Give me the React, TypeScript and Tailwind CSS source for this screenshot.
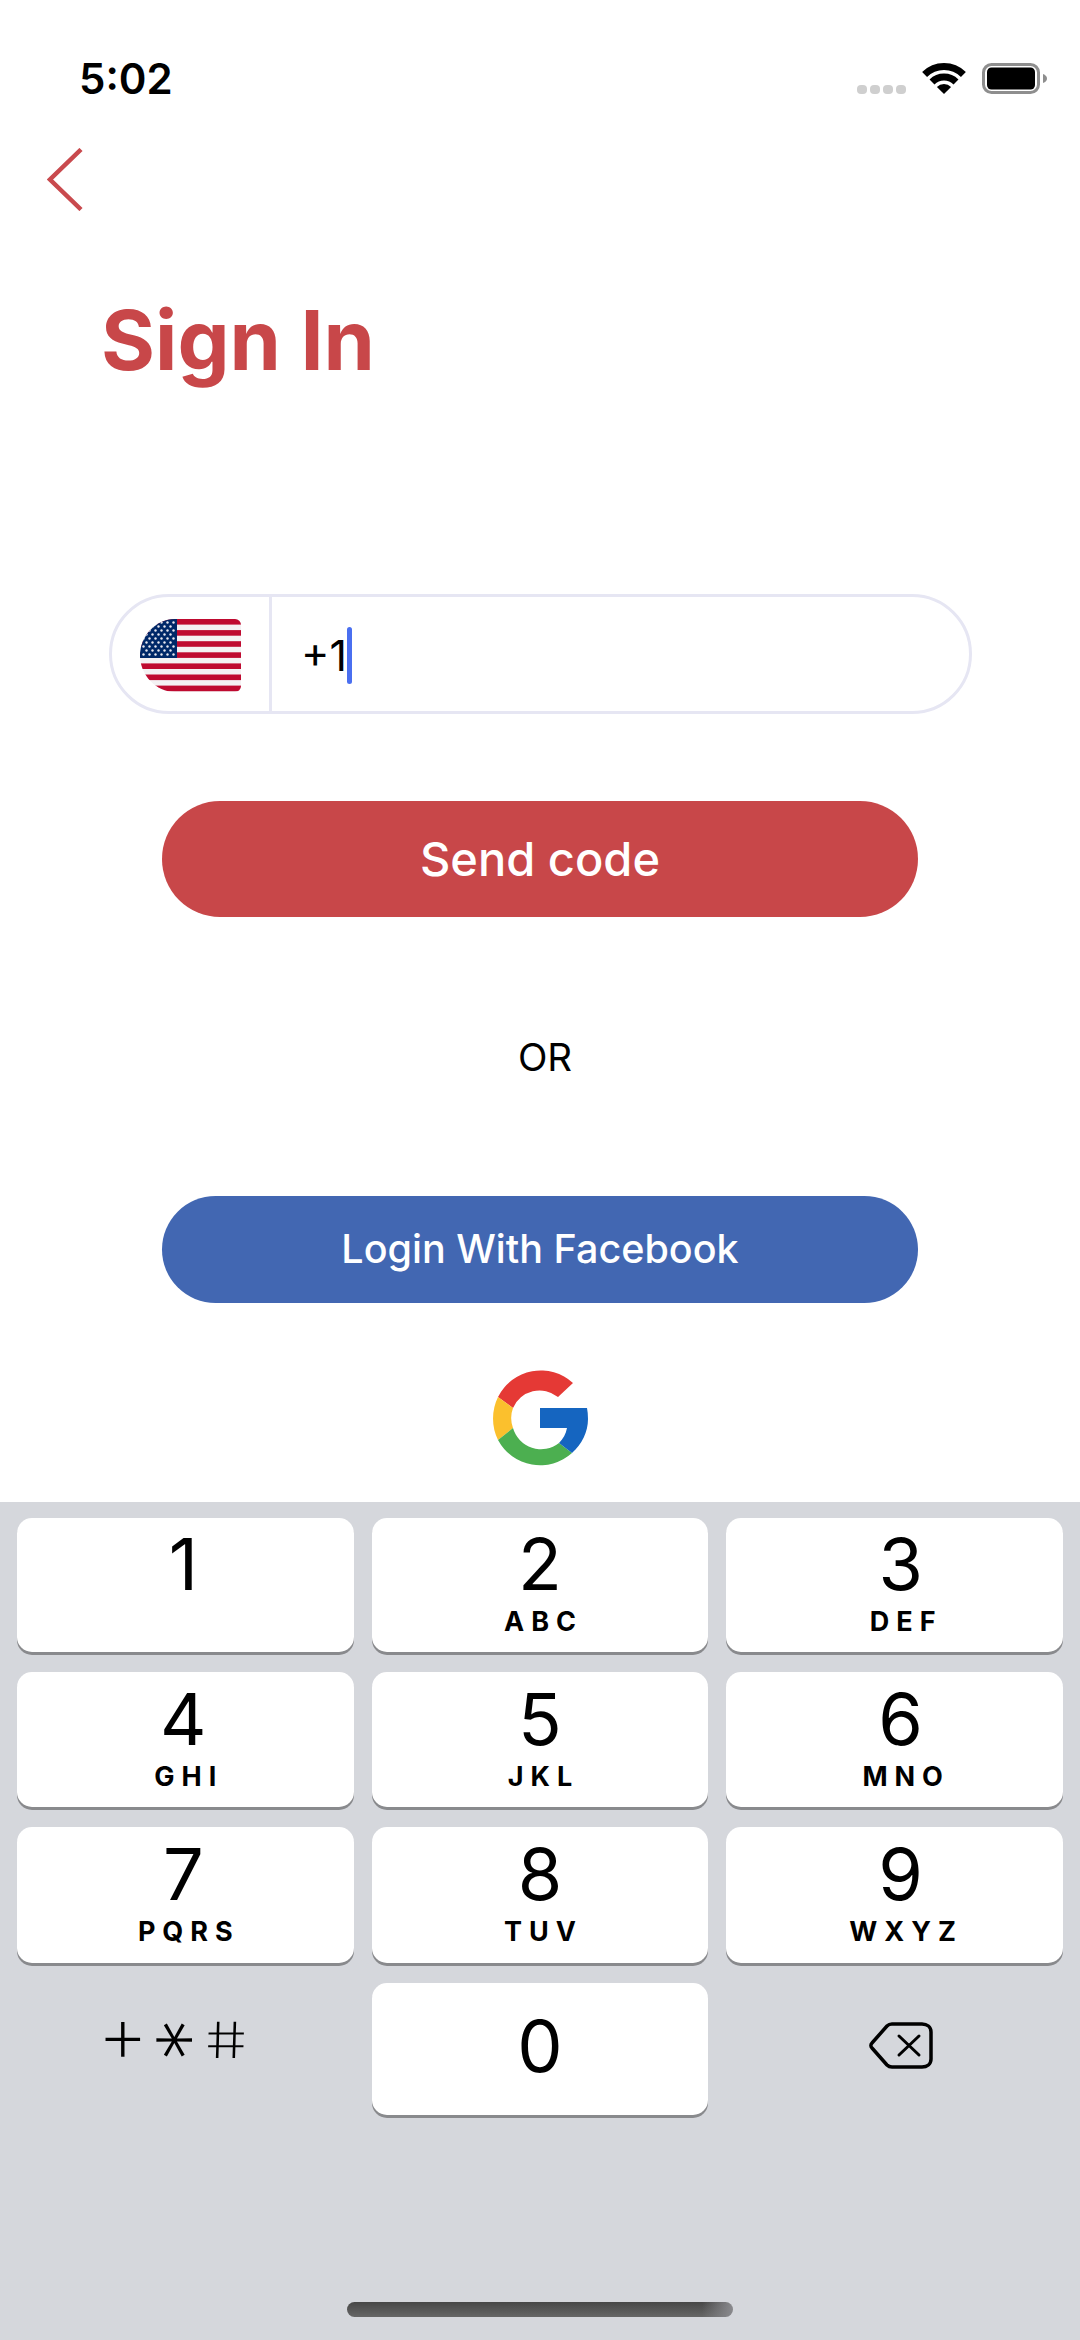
import React from "react";

const rows = [
  [
    { n: "1", l: "", col: 0 },
    { n: "2", l: "ABC", col: 1 },
    { n: "3", l: "DEF", col: 2 },
  ],
  [
    { n: "4", l: "GHI", col: 0 },
    { n: "5", l: "JKL", col: 1 },
    { n: "6", l: "MNO", col: 2 },
  ],
  [
    { n: "7", l: "PQRS", col: 0 },
    { n: "8", l: "TUV", col: 1 },
    { n: "9", l: "WXYZ", col: 2 },
  ],
];

// the digits aren't centred on the outer columns in the reference
const colPad = ["pr-[4px]", "", "pl-[12px]"];
const labelPad = ["pl-[11px]", "pl-[7px]", "pl-[11px]"];

function Wifi() {
  return (
    <svg width="44" height="31" viewBox="0 0 44 31" fill="none" className="ml-[16px]">
      <path d="M2.600 11.600A27.500 27.500 0 0 1 41.400 11.600" stroke="#000" strokeWidth="7" />
      <path d="M10 19A17 17 0 0 1 34 19" stroke="#000" strokeWidth="7" />
      <path d="M22 31L14.900 23.900A10 10 0 0 1 29.100 23.900Z" fill="#000" />
    </svg>
  );
}

function Battery() {
  return (
    <svg width="65" height="31" viewBox="0 0 65 31" className="ml-[16px]">
      <rect x="1.500" y="1.500" width="55" height="28" rx="8" fill="none" stroke="#8e8e8e" strokeWidth="3" />
      <rect x="5" y="4.500" width="48" height="22" rx="4.500" fill="#000" />
      <path d="M61 11C63.500 12 65 13.500 65 15.500S63.500 19 61 20Z" fill="#8e8e8e" />
    </svg>
  );
}

function Flag() {
  const stripes = [0, 1, 2, 3, 4, 5, 6];
  const stars: [number, number][] = [];
  for (let r = 0; r < 9; r++) {
    const cols = r % 2 === 0 ? 6 : 5;
    for (let c = 0; c < cols; c++) {
      stars.push([(r % 2 === 0 ? 3.500 : 6.500) + c * 6, 3.500 + r * 4]);
    }
  }
  return (
    <svg width="101" height="73" viewBox="0 0 101 73">
      <defs>
        <clipPath id="flagClip">
          <path d="M35 0H95A6 6 0 0 1 101 6V67A6 6 0 0 1 95 73H35C16 73 0 56 0 36.500S16 0 35 0Z" />
        </clipPath>
      </defs>
      <g clipPath="url(#flagClip)">
        <rect width="101" height="73" fill="#f4f1f3" />
        {stripes.map((s) => (
          <rect key={s} y={s * 11.100} width="101" height="5.600" fill="#bf0a30" />
        ))}
        <rect width="37" height="39" fill="#002868" />
        {stars.map(([x, y], i) => (
          <circle key={i} cx={x} cy={y} r="1.200" fill="#e8e8f0" />
        ))}
      </g>
    </svg>
  );
}

function GoogleLogo() {
  return (
    <svg width="96" height="97" viewBox="0 0 96 97" className="block">
      <path d="M6 27A48 48.500 0 0 1 81 13L66 27A29 29 0 0 0 21 38Z" fill="#e53935" />
      <path d="M6 27L21 38A29 29 0 0 0 21 58L6 70A48 48.500 0 0 1 6 27Z" fill="#fbc02d" />
      <path d="M6 70L21 58A29 29 0 0 0 67 73L80 83A48 48.500 0 0 1 6 70Z" fill="#4caf50" />
      <path d="M48 38H95Q96 43 96 49C96 62 90 74 80 83L67 73C71 69 74 64 75 58H48Z" fill="#1565c0" />
    </svg>
  );
}

function Backspace() {
  return (
    <svg width="64" height="47" viewBox="0 0 64 47" fill="none" stroke="#000" strokeLinecap="round" strokeLinejoin="round">
      <path d="M23 2H53C58 2 62 5 62 10V37C62 42 58 45 53 45H23C21 45 19.500 44.500 18 43L3 26C1.500 24.500 1.500 22.500 3 21L18 4C19.500 2.500 21 2 23 2Z" strokeWidth="3.500" />
      <path d="M30 14L50 33M50 14L30 33" strokeWidth="3" />
    </svg>
  );
}

function Key({ n, l, col, top }: { n: string; l: string; col: number; top: string }) {
  return (
    <div className={`bg-white rounded-[15px] shadow-[0_3px_0_#898a8d] flex flex-col items-center ${colPad[col]}`}>
      <div className={`${top} h-[78px] text-[72px] leading-[78px] font-normal text-black`}>{n}</div>
      {l && (
        <div className={`mt-[3px] ${labelPad[col]} text-[27px] leading-[32px] font-bold tracking-[7px] text-black`}>
          {l}
        </div>
      )}
    </div>
  );
}

export default function App() {
  return (
    <div className="w-[1080px] h-[2340px] bg-white flex flex-col font-['Inter',sans-serif]">
      <div className="h-[1502px] flex flex-col shrink-0">
        <div className="pt-[57px] pl-[79px] pr-[33px] flex items-center justify-between h-[101px]">
          <div className="text-[42px] leading-[44px] font-semibold text-black">5:02</div>
          <div className="flex items-end mb-[1px]">
            <div className="flex gap-[3px]">
              <div className="w-[10px] h-[9px] rounded-[4px] bg-[#cfcfcf]" />
              <div className="w-[10px] h-[9px] rounded-[4px] bg-[#cfcfcf]" />
              <div className="w-[10px] h-[9px] rounded-[4px] bg-[#cfcfcf]" />
              <div className="w-[10px] h-[9px] rounded-[4px] bg-[#cfcfcf]" />
            </div>
            <Wifi />
            <Battery />
          </div>
        </div>

        <div className="mt-[47px] ml-[47px]">
          <svg width="36" height="63" viewBox="0 0 36 63" fill="none" className="block">
            <path d="M34 1.500L3 31.500L34 61.500" stroke="#c94a4e" strokeWidth="4.500" />
          </svg>
        </div>

        <h1 className="mt-[79px] ml-[101px] text-[82.500px] leading-[100px] font-bold text-[#c84749]">Sign In</h1>

        <div className="mt-[204px] ml-[109px] w-[863px] h-[120px] rounded-full border-[3px] border-[#e6e6f3] flex items-center">
          <div className="w-[160px] h-full border-r-[3px] border-[#e6e6f3] flex items-center pl-[28px] pt-[2px] shrink-0">
            <Flag />
          </div>
          <div className="ml-[29px] mt-[2px] text-[43px] leading-[52px] text-black">+1</div>
          <div className="ml-0 mt-[2px] w-[5px] h-[57px] rounded-full bg-[#4a6ff0]" />
        </div>

        <div className="mt-[87px] ml-[162px] w-[756px] h-[116px] rounded-full bg-[#c84749] flex items-center justify-center text-[47px] font-medium text-white">
          Send code
        </div>

        <div className="mt-[118px] pl-[10px] text-center text-[38.500px] leading-[44px] text-black">OR</div>

        <div className="mt-[117px] ml-[162px] w-[756px] h-[107px] rounded-full bg-[#4267b2] flex items-center justify-center text-[39.500px] font-medium text-white">
          Login With Facebook
        </div>

        <div className="mt-[67px] ml-[492px]">
          <GoogleLogo />
        </div>
      </div>

      <div className="flex-1 bg-[#d5d7dc] flex flex-col px-[17px] pt-[16px]">
        <div className="grid grid-cols-3 grid-rows-[134px_135px_136px_132px] gap-x-[18px] gap-y-[20px]">
          {rows.flat().map((k) => (
            <Key key={k.n} n={k.n} l={k.l} col={k.col} top={Number(k.n) <= 3 ? "mt-[7px]" : "mt-[8px]"} />
          ))}
          <div className="flex items-start justify-center pr-[22px] pt-[39px] text-black">
            <div className="flex items-center h-[36px] font-extralight">
              <span className="w-[36px] flex justify-center text-[80px] leading-[36px] pb-[14px]">+</span>
              <span className="ml-[17px] w-[36px] flex justify-center text-[88px] leading-[36px] translate-x-[-16px] rotate-90">*</span>
              <span className="ml-[14px] w-[36px] flex justify-center text-[50px] leading-[36px] scale-x-[1.3] skew-x-[8deg]">#</span>
            </div>
          </div>
          <div className="bg-white rounded-[15px] shadow-[0_3px_0_#898a8d] flex justify-center">
            <div className="mt-[24px] h-[78px] text-[72px] leading-[78px] font-normal text-black">0</div>
          </div>
          <div className="flex justify-center items-start pt-[39px] pl-[12px]">
            <Backspace />
          </div>
        </div>
        <div className="mt-auto mb-[23px] mx-auto w-[386px] h-[15px] rounded-full bg-[linear-gradient(to_right,transparent_92%,#8a8a8e),linear-gradient(to_bottom,#474747,#666666)]" />
      </div>
    </div>
  );
}
